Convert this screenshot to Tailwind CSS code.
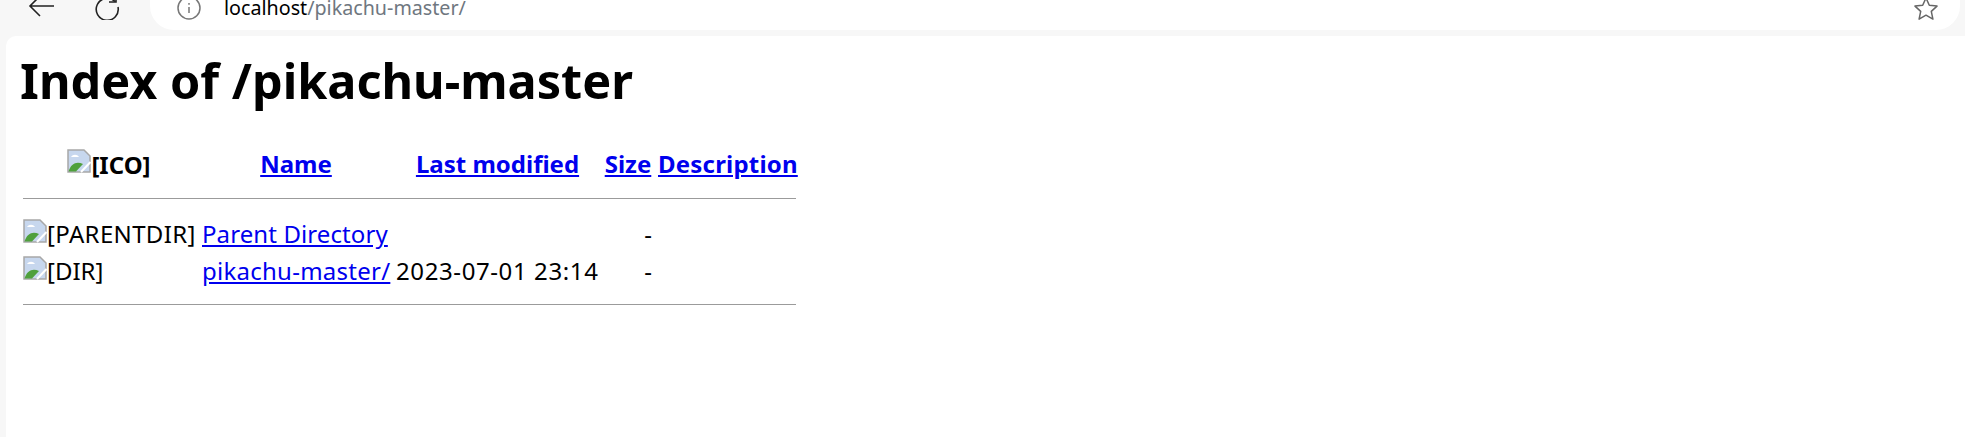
<!DOCTYPE html>
<html lang="en">
<head>
    <meta charset="UTF-8">
    <title>Index of /pikachu-master</title>
    <script src="https://cdn.jsdelivr.net/npm/@tailwindcss/browser@4"></script>
</head>
<body class="h-[437px] overflow-hidden bg-[#f7f7f7] font-['Noto_Sans',sans-serif] text-black">
    <!-- browser toolbar -->
    <div class="flex h-[36px] items-start">
        <div class="flex h-[30px] w-[150px] shrink-0 items-center">
            <svg class="ml-[28px] mt-[-18px] h-[26px] w-[28px]" viewBox="0 0 28 26" fill="none" stroke="#222" stroke-width="1.6"><path d="M2 13h24M12 3 2 13l10 10"/></svg>
            <svg class="ml-[38px] mt-[-16px] h-[26px] w-[26px]" viewBox="0 0 26 26" fill="none" stroke="#222" stroke-width="1.6"><path d="M21 7.5A11 11 0 1 0 24 13"/><path d="M22 1v7h-7"/></svg>
        </div>
        <div class="flex h-[30px] w-[1810px] items-center rounded-br-[24px] rounded-bl-[24px] bg-white">
            <svg class="ml-[26px] mt-[-14px] h-[26px] w-[26px]" viewBox="0 0 26 26" fill="none" stroke="#777" stroke-width="1.5"><circle cx="13" cy="13" r="11"/><path d="M13 12v6M13 8v1.8"/></svg>
            <div class="ml-[22px] self-start text-[19.7px] leading-[15px]">localhost<span class="text-[#6f7780]">/pikachu-master/</span></div>
            <svg class="ml-auto mr-[21px] mt-[-12px] h-[26px] w-[26px]" viewBox="0 0 26 26" fill="none" stroke="#666" stroke-width="1.5" stroke-linejoin="round"><path d="M13 2l3.3 7.2 7.7.9-5.7 5.3 1.6 7.7-6.9-3.9-6.9 3.9 1.6-7.7L2 10.1l7.7-.9z"/></svg>
        </div>
    </div>

    <!-- page -->
    <div class="ml-[6px] h-[401px] rounded-tl-[10px] bg-white pl-[14px]">
        <h1 class="pt-[19px] text-[48.6px] font-bold leading-[50px]">Index of /pikachu-master</h1>
        <table class="mt-[43px] ml-[3px] w-[773px] table-fixed border-collapse text-[24px] leading-[32px]">
            <colgroup>
                <col class="w-[178px]">
                <col class="w-[194px]">
                <col class="w-[205px]">
                <col class="w-[56px]">
                <col class="w-[140px]">
            </colgroup>
            <tr class="h-[32px]">
                <th class="pr-[6px] text-center font-bold whitespace-nowrap"><span class="inline-flex items-center"><svg class="mt-[-7px] h-[24px] w-[24px]" viewBox="0 0 24 24"><path d="M1 1h16l6 6v16H1z" fill="#c7d7ee" stroke="#a8a8a8" stroke-width="1.5"/><path d="M1.5 22.5C4 14 10 12 16 15l-7 7.5z" fill="#4fa03c"/><path d="M14 23 23.5 13" stroke="#fff" stroke-width="2"/><path d="M4 8c2-3 6-3 8 0z" fill="#fff"/></svg>[ICO]</span></th>
                <th class="pr-[4px] text-center font-bold"><a href="#" class="text-[#0000ee] underline">Name</a></th>
                <th class="text-center font-bold whitespace-nowrap"><a href="#" class="text-[#0000ee] underline">Last modified</a></th>
                <th class="text-center font-bold"><a href="#" class="text-[#0000ee] underline">Size</a></th>
                <th class="pl-[2px] text-center font-bold tracking-[0.2px]"><a href="#" class="text-[#0000ee] underline">Description</a></th>
            </tr>
            <tr><th colspan="5" class="pt-[17px] pb-[17px] font-normal"><hr class="border-t border-[#9b9b9b]"></th></tr>
            <tr class="h-[37px]">
                <td class="whitespace-nowrap"><span class="inline-flex items-center tracking-[0.35px]"><svg class="mt-[-7px] h-[24px] w-[24px]" viewBox="0 0 24 24"><path d="M1 1h16l6 6v16H1z" fill="#c7d7ee" stroke="#a8a8a8" stroke-width="1.5"/><path d="M1.5 22.5C4 14 10 12 16 15l-7 7.5z" fill="#4fa03c"/><path d="M14 23 23.5 13" stroke="#fff" stroke-width="2"/><path d="M4 8c2-3 6-3 8 0z" fill="#fff"/></svg>[PARENTDIR]</span></td>
                <td class="whitespace-nowrap pl-[1px] tracking-[0.1px]"><a href="#" class="text-[#0000ee] underline">Parent Directory</a></td>
                <td></td>
                <td class="pr-[4px] text-right">-</td>
                <td></td>
            </tr>
            <tr class="h-[37px]">
                <td class="whitespace-nowrap"><span class="inline-flex items-center"><svg class="mt-[-7px] h-[24px] w-[24px]" viewBox="0 0 24 24"><path d="M1 1h16l6 6v16H1z" fill="#c7d7ee" stroke="#a8a8a8" stroke-width="1.5"/><path d="M1.5 22.5C4 14 10 12 16 15l-7 7.5z" fill="#4fa03c"/><path d="M14 23 23.5 13" stroke="#fff" stroke-width="2"/><path d="M4 8c2-3 6-3 8 0z" fill="#fff"/></svg>[DIR]</span></td>
                <td class="whitespace-nowrap pl-[1px] tracking-[0.25px]"><a href="#" class="text-[#0000ee] underline">pikachu-master/</a></td>
                <td class="whitespace-nowrap pl-[1px] tracking-[0.6px]">2023-07-01 23:14</td>
                <td class="pr-[4px] text-right">-</td>
                <td></td>
            </tr>
            <tr><th colspan="5" class="pt-[14px] font-normal"><hr class="border-t border-[#9b9b9b]"></th></tr>
        </table>
    </div>
</body>
</html>
